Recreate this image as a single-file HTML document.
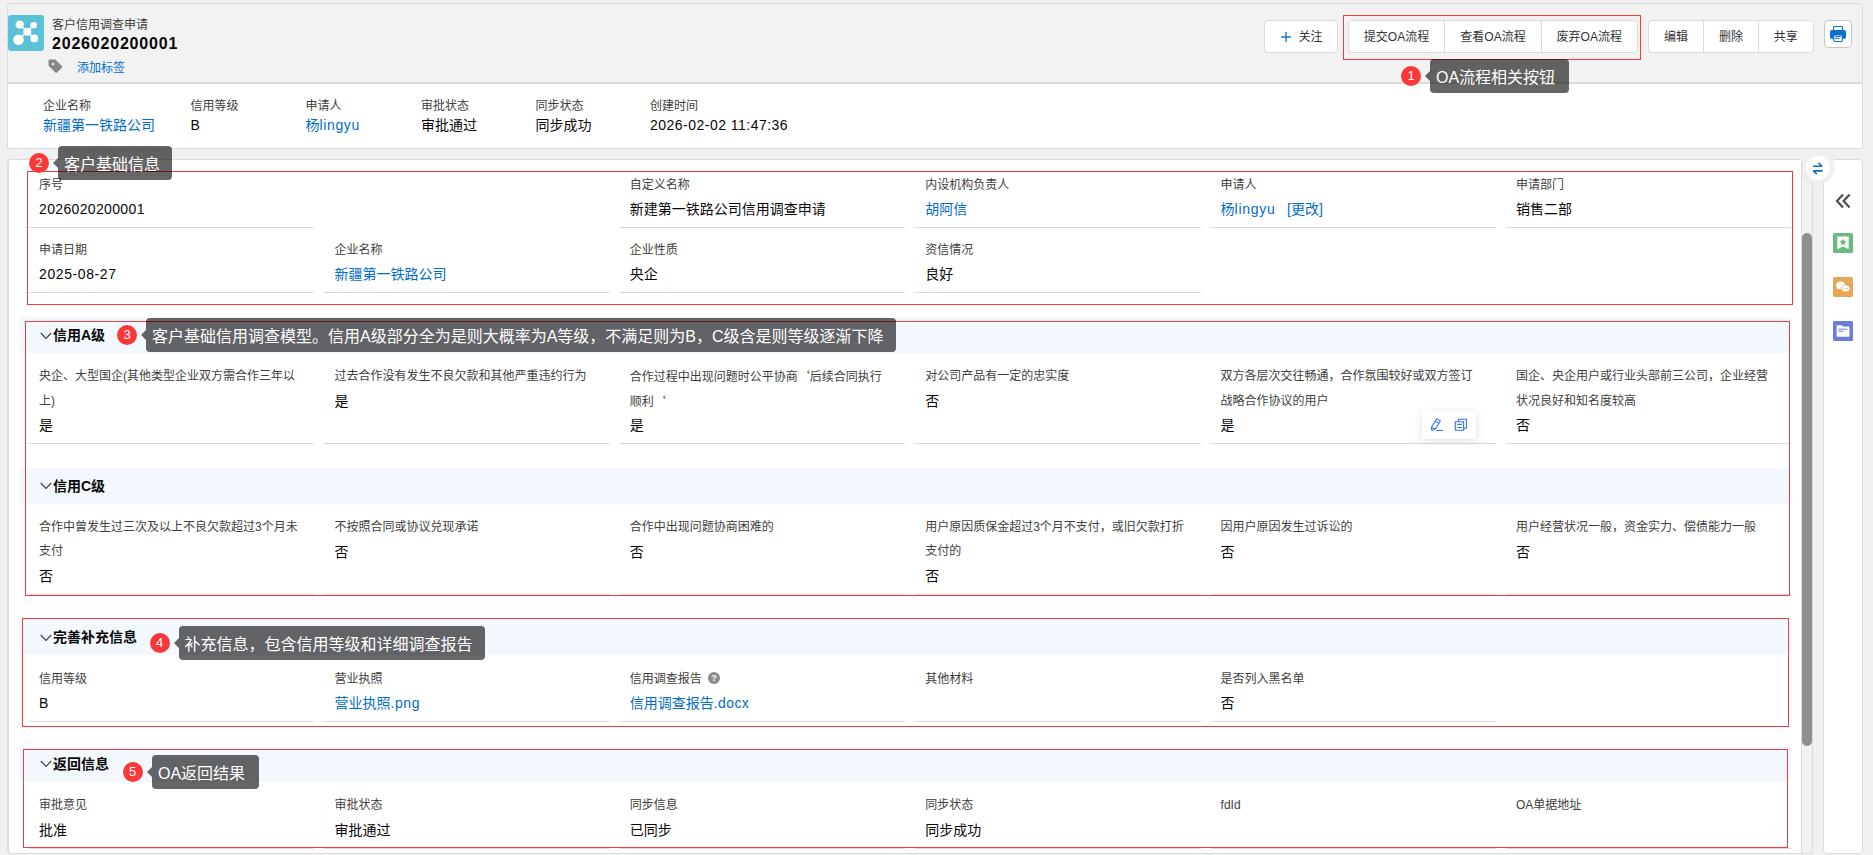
<!DOCTYPE html>
<html lang="zh-CN"><head><meta charset="utf-8"><title>客户信用调查申请</title>
<style>
*{box-sizing:border-box;margin:0;padding:0}
html,body{width:1873px;height:855px;overflow:hidden}
body{background:#f1f1f3;font-family:"Liberation Sans","Noto Sans CJK SC",sans-serif;position:relative;color:#080707}
.a{position:absolute}
.t{position:absolute;white-space:nowrap}
.l{font-size:12px;line-height:24px;color:#3e3e3c}
.v{font-size:14px;line-height:26px;color:#080707}
.b{color:#006dcc}
.u{position:absolute;height:1px;background:#dddbda}
.band{position:absolute;left:19px;width:1772px;height:36px;background:#f3f7fe;border-radius:4px}
.st{position:absolute;left:53px;font-size:14px;line-height:24px;font-weight:bold;color:#080707;white-space:nowrap}
.red{position:absolute;border:1px solid #f93a3a}
.badge{position:absolute;width:20px;height:20px;border-radius:50%;background:#f93939;color:#fff;font-size:13px;line-height:20px;text-align:center}
.tip{position:absolute;height:34px;overflow:visible;background:rgba(0,0,0,.6);border-radius:4px;color:#fff;font-size:16px;line-height:37px;padding:0 12px 0 6px;white-space:nowrap}
.tip:before{content:"";position:absolute;left:-5px;top:12px;border-style:solid;border-width:5px 5px 5px 0;border-color:transparent rgba(0,0,0,.6) transparent transparent}
.btn{position:absolute;top:20px;height:33px;background:#fff;border:1px solid #dddbda;font-size:12px;line-height:33px;text-align:center;color:#333}
.q{font-family:"Noto Sans CJK SC",sans-serif}
</style></head>
<body>
<div class="a" style="left:7px;top:3px;width:1856px;height:146px;border:1px solid #dddbda;border-radius:4px 4px 0 0;background:#fff;overflow:hidden"><div class="a" style="left:0;top:0;width:100%;height:80px;background:#f3f2f2;border-bottom:2px solid #dddbda;box-sizing:content-box;height:78px"></div></div>
<svg class="a" style="left:8px;top:15px" width="36" height="36" viewBox="0 0 36 36"><rect width="36" height="36" rx="3" fill="#5bc1d7"/><g stroke="#fff" stroke-width="1.4" fill="#fff"><line x1="19.3" y1="16.8" x2="11.7" y2="9.6"/><line x1="19.3" y1="16.8" x2="25.7" y2="10.2"/><line x1="19.3" y1="16.8" x2="10.5" y2="24.8"/><line x1="19.3" y1="16.8" x2="26.3" y2="23.4"/></g><g fill="#fff"><circle cx="11.7" cy="9.6" r="4.2"/><circle cx="25.7" cy="10.2" r="3.3"/><circle cx="19.3" cy="16.8" r="4"/><circle cx="10.5" cy="24.8" r="5.3"/><circle cx="26.3" cy="23.4" r="3.9"/></g></svg>
<div class="t " style="left:52px;top:13.1px;line-height:24px;font-size:12px;color:#3e3e3c">客户信用调查申请</div>
<div class="t " style="left:52px;top:32.1px;line-height:24px;font-size:16px;font-weight:bold;color:#080707;letter-spacing:0.8px">2026020200001</div>
<svg class="a" style="left:47px;top:58px" width="17" height="17" viewBox="0 0 17 17"><path d="M1.5 2.7 C1.5 2 2 1.5 2.7 1.5 L7.6 1.5 C8 1.5 8.4 1.65 8.7 1.95 L14.9 8.1 C15.35 8.55 15.35 9.25 14.9 9.7 L10 14.6 C9.55 15.05 8.85 15.05 8.4 14.6 L1.95 8.2 C1.65 7.9 1.5 7.55 1.5 7.1 Z M6 4.8 A1.25 1.25 0 1 0 6 7.3 A1.25 1.25 0 1 0 6 4.8 Z" fill="#888" fill-rule="evenodd"/></svg>
<div class="t b" style="left:77px;top:56.4px;line-height:24px;font-size:12px">添加标签</div>
<div class="btn" style="left:1264px;width:74px;border-radius:4px;text-align:left;padding-left:33.5px">关注</div>
<svg class="a" style="left:1280px;top:30.5px" width="12" height="12" viewBox="0 0 12 12"><path d="M6 1v10M1 6h10" stroke="#1b75d0" stroke-width="1.4" fill="none"/></svg>
<div class="red" style="left:1343px;top:15px;width:298px;height:45px"></div>
<div class="btn" style="left:1348px;width:97px;border-radius:4px 0 0 4px">提交OA流程</div>
<div class="btn" style="left:1444px;width:98px;border-radius:0">查看OA流程</div>
<div class="btn" style="left:1541px;width:96.5px;border-radius:0 4px 4px 0">废弃OA流程</div>
<div class="btn" style="left:1648px;width:56px;border-radius:4px 0 0 4px">编辑</div>
<div class="btn" style="left:1703px;width:56px;border-radius:0">删除</div>
<div class="btn" style="left:1758px;width:55.5px;border-radius:0 4px 4px 0">共享</div>
<div class="a" style="left:1824px;top:20px;width:28px;height:28px;background:#fff;border:1px solid #c9c7c5;border-radius:4px"></div>
<svg class="a" style="left:1830px;top:26px" width="16" height="16" viewBox="0 0 16 16"><rect x="3.55" y="0.55" width="8.9" height="4.4" rx="0.9" fill="#fff" stroke="#0b6fce" stroke-width="1.1"/><rect x="0" y="4" width="16" height="8.8" rx="1.9" fill="#0b6fce"/><rect x="3.75" y="8.9" width="8.5" height="6.55" rx="0.9" fill="#fff" stroke="#0b6fce" stroke-width="1.1"/><path d="M5.2 10.6 h5.7 M5.2 12.55 h3.7" stroke="#0b6fce" stroke-width="1"/></svg>
<div class="badge" style="left:1401px;top:66px">1</div>
<div class="tip" style="left:1430px;top:59px;width:139px">OA流程相关按钮</div>
<div class="t l" style="left:43px;top:94px">企业名称</div>
<div class="t v b" style="left:43px;top:112.2px;line-height:26px;">新疆第一铁路公司</div>
<div class="t l" style="left:190.6px;top:94px">信用等级</div>
<div class="t v" style="left:190.6px;top:112.2px;line-height:26px;">B</div>
<div class="t l" style="left:305.6px;top:94px">申请人</div>
<div class="t v b" style="left:305.6px;top:112.2px;line-height:26px;">杨<span style="letter-spacing:.6px">lingyu</span></div>
<div class="t l" style="left:420.9px;top:94px">审批状态</div>
<div class="t v" style="left:420.9px;top:112.2px;line-height:26px;">审批通过</div>
<div class="t l" style="left:535.4px;top:94px">同步状态</div>
<div class="t v" style="left:535.4px;top:112.2px;line-height:26px;">同步成功</div>
<div class="t l" style="left:650px;top:94px">创建时间</div>
<div class="t v" style="left:650px;top:112.2px;line-height:26px;"><span style="letter-spacing:.48px">2026-02-02 11:47:36</span></div>
<div class="a" style="left:7px;top:159px;width:1806px;height:695px;border:1px solid #dddbda;border-radius:4px 0 0 4px;background:#f1f1f3"></div>
<div class="a" style="left:8px;top:160px;width:1794px;height:693px;background:#fff;border-right:1px solid #dddbda;border-left:1px solid #dddbda;border-radius:3px 0 0 3px"></div>
<div class="a" style="left:1802px;top:233px;width:10px;height:513px;border-radius:5px;background:#8f8f91"></div>
<div class="t l" style="left:39.0px;top:173px">序号</div>
<div class="t v" style="left:39.0px;top:195.7px;line-height:26px;"><span style="letter-spacing:.35px">2026020200001</span></div>
<div class="u" style="left:29px;top:227px;width:285.4px"></div>
<div class="t l" style="left:629.8px;top:173px">自定义名称</div>
<div class="t v" style="left:629.8px;top:195.7px;line-height:26px;">新建第一铁路公司信用调查申请</div>
<div class="u" style="left:619.8px;top:227px;width:285.4px"></div>
<div class="t l" style="left:925.2px;top:173px">内设机构负责人</div>
<div class="t v b" style="left:925.2px;top:195.7px;line-height:26px;">胡阿信</div>
<div class="u" style="left:915.2px;top:227px;width:285.4px"></div>
<div class="t l" style="left:1220.6px;top:173px">申请人</div>
<div class="t v b" style="left:1220.6px;top:195.7px;line-height:26px;">杨<span style="letter-spacing:.7px">lingyu</span>&nbsp;&nbsp;&nbsp;[更改]</div>
<div class="u" style="left:1210.6px;top:227px;width:285.4px"></div>
<div class="t l" style="left:1516.0px;top:173px">申请部门</div>
<div class="t v" style="left:1516.0px;top:195.7px;line-height:26px;">销售二部</div>
<div class="u" style="left:1506px;top:227px;width:285.4px"></div>
<div class="t l" style="left:39.0px;top:238px">申请日期</div>
<div class="t v" style="left:39.0px;top:261px;line-height:26px;"><span style="letter-spacing:.6px">2025-08-27</span></div>
<div class="u" style="left:29px;top:292px;width:285.4px"></div>
<div class="t l" style="left:334.4px;top:238px">企业名称</div>
<div class="t v b" style="left:334.4px;top:261px;line-height:26px;">新疆第一铁路公司</div>
<div class="u" style="left:324.4px;top:292px;width:285.4px"></div>
<div class="t l" style="left:629.8px;top:238px">企业性质</div>
<div class="t v" style="left:629.8px;top:261px;line-height:26px;">央企</div>
<div class="u" style="left:619.8px;top:292px;width:285.4px"></div>
<div class="t l" style="left:925.2px;top:238px">资信情况</div>
<div class="t v" style="left:925.2px;top:261px;line-height:26px;">良好</div>
<div class="u" style="left:915.2px;top:292px;width:285.4px"></div>
<div class="band" style="top:317px"></div>
<svg class="a" style="left:40px;top:331.5px" width="12" height="8" viewBox="0 0 12 8"><path d="M0.8 1 L6 6.4 L11.2 1" fill="none" stroke="#3e3e3c" stroke-width="1.1"/></svg>
<div class="st" style="top:323px">信用A级</div>
<div class="t l" style="left:39.0px;top:364px">央企、大型国企(其他类型企业双方需合作三年以</div>
<div class="t l" style="left:39.0px;top:389px">上)</div>
<div class="t v" style="left:39.0px;top:412.1px;line-height:26px;">是</div>
<div class="u" style="left:29px;top:443px;width:285.4px"></div>
<div class="t l" style="left:334.4px;top:364px">过去合作没有发生不良欠款和其他严重违约行为</div>
<div class="t v" style="left:334.4px;top:387.7px;line-height:26px;">是</div>
<div class="u" style="left:324.4px;top:443px;width:285.4px"></div>
<div class="t l" style="left:629.8px;top:364px">合作过程中出现问题时公平协商<span class="q">‘</span>后续合同执行</div>
<div class="t l" style="left:629.8px;top:389px">顺利<span class="q">‘</span></div>
<div class="t v" style="left:629.8px;top:412.1px;line-height:26px;">是</div>
<div class="u" style="left:619.8px;top:443px;width:285.4px"></div>
<div class="t l" style="left:925.2px;top:364px">对公司产品有一定的忠实度</div>
<div class="t v" style="left:925.2px;top:387.7px;line-height:26px;">否</div>
<div class="u" style="left:915.2px;top:443px;width:285.4px"></div>
<div class="t l" style="left:1220.6px;top:364px">双方各层次交往畅通，合作氛围较好或双方签订</div>
<div class="t l" style="left:1220.6px;top:389px">战略合作协议的用户</div>
<div class="t v" style="left:1220.6px;top:412.1px;line-height:26px;">是</div>
<div class="u" style="left:1210.6px;top:443px;width:285.4px"></div>
<div class="t l" style="left:1516.0px;top:364px">国企、央企用户或行业头部前三公司，企业经营</div>
<div class="t l" style="left:1516.0px;top:389px">状况良好和知名度较高</div>
<div class="t v" style="left:1516.0px;top:412.1px;line-height:26px;">否</div>
<div class="u" style="left:1506px;top:443px;width:285.4px"></div>
<div class="a" style="left:1422px;top:411px;width:54px;height:28px;background:#fff;box-shadow:0 2px 10px rgba(0,0,0,.13)"></div>
<svg class="a" style="left:1430px;top:418px" width="14" height="14" viewBox="0 0 14 14"><path d="M6.6 0.7 L10.3 2.9 L5.6 11 L1.8 12.4 L1.4 9.4 Z M5.2 3.1 L8.9 5.3 M1.6 9.6 L5.4 11 M6.6 12.5 H13" fill="none" stroke="#3370ff" stroke-width="1.05" stroke-linejoin="round"/></svg>
<svg class="a" style="left:1454px;top:418px" width="14" height="14" viewBox="0 0 14 14"><path d="M1.3 3.7 h8.3 v8.6 h-8.3z M4.4 3.4 V1.2 h8 v9 H9.9 M3.2 6.4 h4.7 M3.2 9.5 h4.7" fill="none" stroke="#3370ff" stroke-width="1.1"/></svg>
<div class="band" style="top:467.5px"></div>
<svg class="a" style="left:40px;top:482.0px" width="12" height="8" viewBox="0 0 12 8"><path d="M0.8 1 L6 6.4 L11.2 1" fill="none" stroke="#3e3e3c" stroke-width="1.1"/></svg>
<div class="st" style="top:473.5px">信用C级</div>
<div class="t l" style="left:39.0px;top:515px">合作中曾发生过三次及以上不良欠款超过3个月未</div>
<div class="t l" style="left:39.0px;top:539px">支付</div>
<div class="t v" style="left:39.0px;top:563.1px;line-height:26px;">否</div>
<div class="u" style="left:29px;top:594px;width:285.4px"></div>
<div class="t l" style="left:334.4px;top:515px">不按照合同或协议兑现承诺</div>
<div class="t v" style="left:334.4px;top:538.7px;line-height:26px;">否</div>
<div class="u" style="left:324.4px;top:594px;width:285.4px"></div>
<div class="t l" style="left:629.8px;top:515px">合作中出现问题协商困难的</div>
<div class="t v" style="left:629.8px;top:538.7px;line-height:26px;">否</div>
<div class="u" style="left:619.8px;top:594px;width:285.4px"></div>
<div class="t l" style="left:925.2px;top:515px">用户原因质保金超过3个月不支付，或旧欠款打折</div>
<div class="t l" style="left:925.2px;top:539px">支付的</div>
<div class="t v" style="left:925.2px;top:563.1px;line-height:26px;">否</div>
<div class="u" style="left:915.2px;top:594px;width:285.4px"></div>
<div class="t l" style="left:1220.6px;top:515px">因用户原因发生过诉讼的</div>
<div class="t v" style="left:1220.6px;top:538.7px;line-height:26px;">否</div>
<div class="u" style="left:1210.6px;top:594px;width:285.4px"></div>
<div class="t l" style="left:1516.0px;top:515px">用户经营状况一般，资金实力、偿债能力一般</div>
<div class="t v" style="left:1516.0px;top:538.7px;line-height:26px;">否</div>
<div class="u" style="left:1506px;top:594px;width:285.4px"></div>
<div class="band" style="top:619px"></div>
<svg class="a" style="left:40px;top:633.5px" width="12" height="8" viewBox="0 0 12 8"><path d="M0.8 1 L6 6.4 L11.2 1" fill="none" stroke="#3e3e3c" stroke-width="1.1"/></svg>
<div class="st" style="top:625px">完善补充信息</div>
<div class="t l" style="left:39.0px;top:667px">信用等级</div>
<div class="t v" style="left:39.0px;top:689.9px;line-height:26px;">B</div>
<div class="u" style="left:29px;top:720.5px;width:285.4px"></div>
<div class="t l" style="left:334.4px;top:667px">营业执照</div>
<div class="t v b" style="left:334.4px;top:689.9px;line-height:26px;">营业执照<span style="letter-spacing:.6px">.png</span></div>
<div class="u" style="left:324.4px;top:720.5px;width:285.4px"></div>
<div class="t l" style="left:629.8px;top:667px">信用调查报告</div>
<div class="t v b" style="left:629.8px;top:689.9px;line-height:26px;">信用调查报告<span style="letter-spacing:.4px">.docx</span></div>
<div class="u" style="left:619.8px;top:720.5px;width:285.4px"></div>
<svg class="a" style="left:707.5px;top:672px" width="12" height="12" viewBox="0 0 12 12"><circle cx="6" cy="6" r="6" fill="#8b8b8b"/><text x="6" y="9.3" font-size="9" font-weight="bold" text-anchor="middle" fill="#fff" font-family="Liberation Sans,sans-serif">?</text></svg>
<div class="t l" style="left:925.2px;top:667px">其他材料</div>
<div class="u" style="left:915.2px;top:720.5px;width:285.4px"></div>
<div class="t l" style="left:1220.6px;top:667px">是否列入黑名单</div>
<div class="t v" style="left:1220.6px;top:689.9px;line-height:26px;">否</div>
<div class="u" style="left:1210.6px;top:720.5px;width:285.4px"></div>
<div class="band" style="top:745.6px"></div>
<svg class="a" style="left:40px;top:760.1px" width="12" height="8" viewBox="0 0 12 8"><path d="M0.8 1 L6 6.4 L11.2 1" fill="none" stroke="#3e3e3c" stroke-width="1.1"/></svg>
<div class="st" style="top:751.6px">返回信息</div>
<div class="t l" style="left:39.0px;top:793px">审批意见</div>
<div class="t v" style="left:39.0px;top:816.7px;line-height:26px;">批准</div>
<div class="u" style="left:29px;top:848px;width:285.4px"></div>
<div class="t l" style="left:334.4px;top:793px">审批状态</div>
<div class="t v" style="left:334.4px;top:816.7px;line-height:26px;">审批通过</div>
<div class="u" style="left:324.4px;top:848px;width:285.4px"></div>
<div class="t l" style="left:629.8px;top:793px">同步信息</div>
<div class="t v" style="left:629.8px;top:816.7px;line-height:26px;">已同步</div>
<div class="u" style="left:619.8px;top:848px;width:285.4px"></div>
<div class="t l" style="left:925.2px;top:793px">同步状态</div>
<div class="t v" style="left:925.2px;top:816.7px;line-height:26px;">同步成功</div>
<div class="u" style="left:915.2px;top:848px;width:285.4px"></div>
<div class="t l" style="left:1220.6px;top:793px">fdId</div>
<div class="u" style="left:1210.6px;top:848px;width:285.4px"></div>
<div class="t l" style="left:1516.0px;top:793px">OA单据地址</div>
<div class="u" style="left:1506px;top:848px;width:285.4px"></div>
<div class="red" style="left:27px;top:171px;width:1766px;height:134px"></div>
<div class="red" style="left:25px;top:321px;width:1765px;height:275px"></div>
<div class="red" style="left:22px;top:618px;width:1767px;height:109px"></div>
<div class="red" style="left:23px;top:749px;width:1765px;height:99px"></div>
<div class="badge" style="left:29px;top:152.5px">2</div>
<div class="tip" style="left:58px;top:146px">客户基础信息</div>
<div class="badge" style="left:117px;top:325px">3</div>
<div class="tip" style="left:146px;top:318px">客户基础信用调查模型。信用A级部分全为是则大概率为A等级，不满足则为B，C级含是则等级逐渐下降</div>
<div class="badge" style="left:149.5px;top:633px">4</div>
<div class="tip" style="left:178.5px;top:626px">补充信息，包含信用等级和详细调查报告</div>
<div class="badge" style="left:122.5px;top:762px">5</div>
<div class="tip" style="left:152px;top:755px;width:107px">OA返回结果</div>
<div class="a" style="left:1823px;top:159px;width:40px;height:695px;border:1px solid #dddbda;border-radius:4px;background:#fff"></div>
<div class="a" style="left:1802px;top:151.5px;width:32px;height:32px;border-radius:50%;background:#efefef;box-shadow:0 0 0 1px rgba(0,0,0,.04)"></div>
<div class="a" style="left:1801px;top:151px;width:33px;height:10px;background:#f0f0f0"></div>
<div class="a" style="left:1806px;top:155.5px;width:24px;height:24px;border-radius:50%;background:#fff"></div>
<svg class="a" style="left:1811px;top:160px" width="14" height="16" viewBox="0 0 14 16"><path d="M2 6.3 H10.9 L7.5 2.7 M11.6 10.9 H2.5 L5.8 14.3" fill="none" stroke="#0b6fce" stroke-width="1.6" stroke-linejoin="bevel"/></svg>
<svg class="a" style="left:1835px;top:193px" width="17" height="16" viewBox="0 0 17 16"><path d="M8 1.6 L2 8 L8 14.4 M14.6 1.6 L8.6 8 L14.6 14.4" fill="none" stroke="#514f4d" stroke-width="2.2"/></svg>
<svg class="a" style="left:1833px;top:233px" width="20" height="20" viewBox="0 0 20 20"><rect width="20" height="20" rx="1.5" fill="#6bbc7c"/><path d="M4.3 3.6 h11.4 v12.6 l-5.7 -2.6 l-5.7 2.6z" fill="#fff"/><path d="M10 5.6 l1.05 2.2 2.4 0.3 -1.75 1.65 0.45 2.4 -2.15 -1.2 -2.15 1.2 0.45 -2.4 -1.75 -1.65 2.4 -0.3z" fill="#6bbc7c"/></svg>
<svg class="a" style="left:1833px;top:277px" width="20" height="20" viewBox="0 0 20 20"><rect width="20" height="20" rx="1.5" fill="#e8a658"/><path d="M7.6 4.6 c-2.7 0 -4.6 1.6 -4.6 3.6 c0 1.1 0.6 2.1 1.5 2.8 l-0.4 1.6 l1.8 -0.9 c0.5 0.1 1.1 0.2 1.7 0.2 c2.7 0 4.6 -1.7 4.6 -3.7 c0 -2 -1.9 -3.6 -4.6 -3.6z" fill="#fff"/><path d="M12.6 8 c-2.6 0 -4.4 1.5 -4.4 3.4 c0 1.9 1.8 3.4 4.4 3.4 c0.5 0 1 -0.1 1.5 -0.2 l1.7 0.9 l-0.4 -1.5 c0.9 -0.6 1.5 -1.6 1.5 -2.6 c0 -1.9 -1.8 -3.4 -4.3 -3.4z" fill="#fff" stroke="#e8a658" stroke-width="0.8"/><g fill="#e8a658"><circle cx="10.9" cy="11.3" r="0.6"/><circle cx="12.7" cy="11.3" r="0.6"/><circle cx="14.5" cy="11.3" r="0.6"/></g></svg>
<svg class="a" style="left:1833px;top:321px" width="20" height="20" viewBox="0 0 20 20"><rect width="20" height="20" rx="1.5" fill="#6b7edb"/><path d="M3.6 5.2 a1 1 0 0 1 1 -1 h4.2 l1 1.2 h5.6 a1 1 0 0 1 1 1 v8.4 a1 1 0 0 1 -1 1 H4.6 a1 1 0 0 1 -1 -1z" fill="#fff"/><path d="M5.4 8.2 h9.2 M5.4 10.2 h5" stroke="#6b7edb" stroke-width="1"/></svg>
</body></html>
